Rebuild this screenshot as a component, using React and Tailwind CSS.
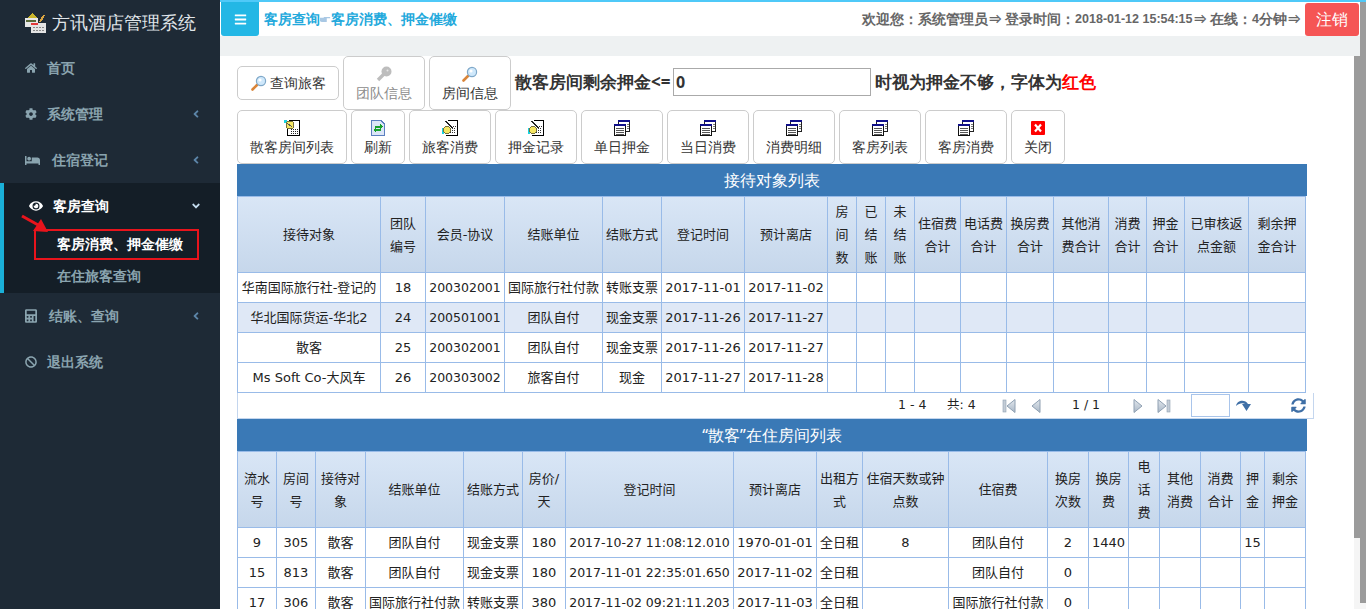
import React from 'react';
import { FaHome, FaCog, FaBed, FaEye, FaCalculator, FaBan, FaAngleLeft, FaAngleDown, FaBars, FaSyncAlt } from 'react-icons/fa';

const font = "font-['DejaVu_Sans','Noto_Sans_CJK_SC',sans-serif]";

// little toolbar pictures, drawn by hand
const Magnifier = () => (
    <svg width="16" height="16" viewBox="0 0 16 16">
        <path d="M1.5 14.5L6 10" stroke="#d9853a" strokeWidth="2.6" strokeLinecap="round" />
        <circle cx="10" cy="6" r="4.6" fill="#cfe8fb" stroke="#7fa8c9" strokeWidth="1.2" />
        <circle cx="9" cy="5" r="1.6" fill="#ffffff" />
    </svg>
);

const KeyIcon = () => (
    <svg width="16" height="16" viewBox="0 0 16 16">
        <circle cx="10.500" cy="5.500" r="5" fill="#bdbdbd" />
        <path d="M8 8L2 14" stroke="#bdbdbd" strokeWidth="3.400" />
        <circle cx="11.500" cy="4.500" r="1" fill="#e6e6e6" />
    </svg>
);

const StarDoc = () => (
    <svg width="16" height="16" viewBox="0 0 16 16" shapeRendering="crispEdges">
        <path d="M5 0.5H15.5V15.5H3V6" fill="#fff" stroke="#000" />
        <path d="M7 9h7M7 11h7M7 13h7" stroke="#222" strokeDasharray="1 1" />
        <rect x="0" y="0" width="3" height="3" fill="#19d3e0" />
        <circle cx="6" cy="5" r="4" fill="#f5e663" stroke="#77713a" />
        <path d="M3 3l5 4" stroke="#555" />
    </svg>
);

const RefreshDoc = () => (
    <svg width="14" height="16" viewBox="0 0 14 16" shapeRendering="crispEdges">
        <path d="M0.5 0.5H10L13.5 4V15.5H0.5Z" fill="#dbe6f7" stroke="#5b7fc0" />
        <path d="M4 6h5V4l3 3-3 2V8H4z" fill="#18a22c" />
        <path d="M10 11H5v2L2 10l3-2v1h5z" fill="#18a22c" />
    </svg>
);

const PenDoc = () => (
    <svg width="16" height="16" viewBox="0 0 16 16" shapeRendering="crispEdges">
        <path d="M6 0.5H15.5V15.5H4" fill="#fff" stroke="#000" />
        <path d="M9 6h5M10 8h4M10 10h4M8 12h6" stroke="#333" strokeDasharray="1 1" />
        <rect x="0" y="8" width="2" height="6" fill="#19d3e0" />
        <circle cx="5" cy="10" r="3.6" fill="#f5e663" stroke="#77713a" />
        <path d="M4 1l6 7" stroke="#222" strokeWidth="1.6" />
    </svg>
);

const PagesIcon = () => (
    <svg width="16" height="16" viewBox="0 0 16 16" shapeRendering="crispEdges">
        <rect x="4.500" y="0.500" width="11" height="11" fill="#fff" stroke="#222" />
        <rect x="4" y="0" width="12" height="2" fill="#10108a" />
        <rect x="0.500" y="4.500" width="11" height="11" fill="#fff" stroke="#111" />
        <rect x="0" y="4" width="12" height="2" fill="#10108a" />
        <path d="M2 8h8M2 10h8M2 12h8M2 14h8" stroke="#555" />
        <path d="M13 4h2M13 6h2M13 8h2" stroke="#777" />
    </svg>
);

const CloseIcon = () => (
    <svg width="14" height="14" viewBox="0 0 14 14">
        <rect width="14" height="14" rx="1" fill="#ff0000" />
        <path d="M4 3.500l6 7M10 3.500l-6 7" stroke="#fff" strokeWidth="2.200" />
    </svg>
);

const LogoIcon = () => (
    <svg width="22" height="24" viewBox="0 0 22 24" shapeRendering="crispEdges">
        <path d="M3 7L7 2l5 5z" fill="#c9b52c" />
        <rect x="0" y="7" width="13" height="9" fill="#e8e8e8" />
        <rect x="1" y="9" width="10" height="2" fill="#5a6a3a" />
        <rect x="6" y="12" width="15" height="10" fill="#e4e4e4" />
        <rect x="6" y="12" width="7" height="2" fill="#e23a3a" />
        <path d="M8 16h11M8 19h11" stroke="#888" strokeDasharray="2 1" />
        <path d="M15 11l4-7" stroke="#d9a441" strokeWidth="2" />
    </svg>
);

const HandIcon = () => (
    <svg width="11" height="7" viewBox="0 0 13 8">
        <path d="M0 2h4l1-1h7v1.500H8V7H2L0 6z" fill="#a9c8e4" />
    </svg>
);

const PagerArrow = ({ dir, bar }) => (
    <svg width="15" height="16" viewBox="0 0 15 16">
        <defs>
            <linearGradient id="pagerFill" x1="0" y1="0" x2="0" y2="1">
                <stop offset="0" stopColor="#e3e8ee" />
                <stop offset="1" stopColor="#a9b7c6" />
            </linearGradient>
        </defs>
        <g transform={dir === 'right' ? 'matrix(-1 0 0 1 15 0)' : undefined}>
            {bar && <rect x="1" y="2" width="3" height="12" fill="#c3ccd6" stroke="#8fa0b2" strokeWidth="0.600" />}
            <path d="M13 1.500V14.500L5 8Z" fill="url(#pagerFill)" stroke="#8fa0b2" />
        </g>
    </svg>
);

const GoArrow = () => (
    <svg width="17" height="16" viewBox="0 0 17 16">
        <path d="M1 8C2 2 10 1 13 6L16 6L11.500 13L7 6H10C8 4.500 4 5 1 8Z" fill="#3f6fa6" />
    </svg>
);

const menuItems = [
    { label: '首页', Icon: FaHome, gap: 'gap-[10px]' },
    { label: '系统管理', Icon: FaCog, gap: 'gap-[10px]', arrow: true },
    { label: '住宿登记', Icon: FaBed, gap: 'gap-[12px]', arrow: true, wide: true },
];

const SideItem = ({ label, Icon, gap, arrow, wide }) => (
    <div className={`flex h-[46px] items-center pl-[25px] pr-[18px] text-[#8aa4af] text-sm font-bold ${gap}`}>
        <Icon className={wide ? 'w-[15px] h-[15px]' : 'w-3 h-[14px]'} />
        <span className="flex-1">{label}</span>
        {arrow && <FaAngleLeft className="w-3 h-3 text-[#5c85a8]" />}
    </div>
);

const Sidebar = () => (
    <aside className="w-[220px] shrink-0 bg-[#1e2a36] h-full">
        <div className="flex h-[45px] items-center gap-[5px] pl-[25px]">
            <LogoIcon />
            <span className="text-[18px] text-[#e0e6ea] font-medium">方讯酒店管理系统</span>
        </div>
        {menuItems.map((item) => (
            <SideItem key={item.label} {...item} />
        ))}
        <div className="h-[110px] bg-[#141e27] border-l-4 border-[#1ab0d8]">
            <div className="flex h-[46px] items-center gap-[10px] pl-[25px] pr-[18px] text-white text-sm font-bold">
                <FaEye className="w-[14px] h-[14px]" />
                <span className="flex-1">客房查询</span>
                <FaAngleDown className="w-3 h-3 text-[#c4dcef]" />
            </div>
            <div className="ml-[30px] w-[165px] h-[31px] flex items-center pl-[21px] border-2 border-[#e8141c] text-white text-[13.500px] font-bold">
                客房消费、押金催缴
            </div>
            <div className="h-[33px] flex items-center pl-[53px] text-[#8aa4af] text-[13.500px] font-bold">在住旅客查询</div>
        </div>
        <SideItem label="结账、查询" Icon={FaCalculator} gap="gap-[12px]" arrow />
        <SideItem label="退出系统" Icon={FaBan} gap="gap-[10px]" />
    </aside>
);

const TopBar = () => (
    <header className="h-[34px] flex items-center bg-white">
        <button className="w-[38px] h-[34px] ml-px bg-[#23b7e5] rounded-b-[3px] flex items-center justify-center text-white">
            <FaBars className="w-[13px] h-[13px]" />
        </button>
        <div className="ml-[5px] flex items-center text-sm font-bold text-[#23a9dc]">
            <span>客房查询</span>
            <HandIcon />
            <span>客房消费、押金催缴</span>
        </div>
        <div className="ml-auto flex items-center text-[#666] text-[13.500px] font-bold whitespace-pre">
            <span>{'欢迎您\uff1a系统管理员⇒ 登录时间\uff1a'}</span>
            <span className="font-['Liberation_Sans'] text-[12.500px]">2018-01-12 15:54:15</span>
            <span>{'⇒ 在线\uff1a'}</span>
            <span className="font-['Liberation_Sans'] text-[12.500px]">4</span>
            <span>分钟⇒</span>
        </div>
        <button className="ml-1 w-[54px] h-[33px] mr-px bg-[#f55555] rounded-[3px] text-white text-base">注销</button>
    </header>
);

const ToolButton = ({ icon, label, disabled }) => (
    <button className={`h-[54px] px-3 shrink-0 bg-white border border-[#ccc] rounded-[5px] flex flex-col items-center pt-[9px] text-sm leading-[20px] ${disabled ? 'text-[#8c8c8c]' : 'text-[#333]'}`}>
        <span className="h-4 flex items-center">{icon}</span>
        <span className="mt-[1px]">{label}</span>
    </button>
);

const Toolbar = () => (
    <div className="text-[#333]">
        <div className="flex items-center gap-1 h-[54px]">
            <button className="h-[34px] w-[102px] shrink-0 bg-white border border-[#ccc] rounded-[5px] flex items-center justify-center gap-[3px] text-sm">
                <Magnifier />
                <span>查询旅客</span>
            </button>
            <ToolButton icon={<KeyIcon />} label="团队信息" disabled />
            <ToolButton icon={<Magnifier />} label="房间信息" />
            <span className="w-[154px] whitespace-nowrap text-[17px] leading-6 font-bold mb-[3px]">散客房间剩余押金&lt;=</span>
            <input
                readOnly
                value="0"
                className="w-[198px] h-[28px] mb-[2px] border border-[#aaa] px-[2px] text-base font-bold text-[#333] outline-none"
            />
            <span className="text-[17px] leading-6 font-bold mb-[3px]">
                {'时视为押金不够\uff0c字体为'}<span className="text-[#ff0000]">红色</span>
            </span>
        </div>
        <div className="flex items-center gap-1 h-[54px]">
            <ToolButton icon={<StarDoc />} label="散客房间列表" />
            <ToolButton icon={<RefreshDoc />} label="刷新" />
            <ToolButton icon={<PenDoc />} label="旅客消费" />
            <ToolButton icon={<PenDoc />} label="押金记录" />
            <ToolButton icon={<PagesIcon />} label="单日押金" />
            <ToolButton icon={<PagesIcon />} label="当日消费" />
            <ToolButton icon={<PagesIcon />} label="消费明细" />
            <ToolButton icon={<PagesIcon />} label="客房列表" />
            <ToolButton icon={<PagesIcon />} label="客房消费" />
            <ToolButton icon={<CloseIcon />} label="关闭" />
        </div>
    </div>
);

// column widths include the right border, first one also has the left border
const guestCols = [144, 45, 79, 98, 59, 83, 83, 29, 29, 29, 46, 46, 47, 55, 38, 38, 64, 57];
const guestHead = ['接待对象', '团队编号', '会员-协议', '结账单位', '结账方式', '登记时间', '预计离店', '房间数', '已结账', '未结账', '住宿费合计', '电话费合计', '换房费合计', '其他消费合计', '消费合计', '押金合计', '已审核返点金额', '剩余押金合计'];
const guestRows = [
    ['华南国际旅行社-登记的', '18', '200302001', '国际旅行社付款', '转账支票', '2017-11-01', '2017-11-02'],
    ['华北国际货运-华北2', '24', '200501001', '团队自付', '现金支票', '2017-11-26', '2017-11-27'],
    ['散客', '25', '200302001', '团队自付', '现金支票', '2017-11-26', '2017-11-27'],
    ['Ms Soft Co-大风车', '26', '200303002', '旅客自付', '现金', '2017-11-27', '2017-11-28'],
];

const roomCols = [40, 39, 50, 98, 59, 43, 168, 83, 46, 86, 99, 41, 40, 31, 41, 40, 24, 41];
const roomHead = ['流水号', '房间号', '接待对象', '结账单位', '结账方式', '房价/天', '登记时间', '预计离店', '出租方式', '住宿天数或钟点数', '住宿费', '换房次数', '换房费', '电话费', '其他消费', '消费合计', '押金', '剩余押金'];
const roomRows = [
    ['9', '305', '散客', '团队自付', '现金支票', '180', '2017-10-27 11:08:12.010', '1970-01-01', '全日租', '8', '团队自付', '2', '1440', '', '', '', '15', ''],
    ['15', '813', '散客', '团队自付', '现金支票', '180', '2017-11-01 22:35:01.650', '2017-11-02', '全日租', '', '团队自付', '0'],
    ['17', '306', '散客', '国际旅行社付款', '转账支票', '380', '2017-11-02 09:21:11.203', '2017-11-03', '全日租', '', '国际旅行社付款', '0'],
];

const DataTable = ({ cols, head, rows, shaded }) => (
    <table className={`table-fixed w-[1069px] border-separate border-spacing-0 text-[13px] text-[#222] ${font}`}>
        <colgroup>
            {cols.map((w, i) => (
                <col key={i} style={{ width: w }} />
            ))}
        </colgroup>
        <thead>
            <tr>
                {head.map((h, i) => (
                    <th
                        key={h + i}
                        className={`h-[77px] px-[3px] font-normal leading-[23px] text-center border-t border-r border-b border-[#99bbe8] bg-gradient-to-b from-[#d9e6f6] to-[#c6d7eb] ${i === 0 ? 'border-l' : ''}`}
                    >
                        {h}
                    </th>
                ))}
            </tr>
        </thead>
        <tbody>
            {rows.map((row, r) => (
                <tr key={r} className={r === shaded ? 'bg-[#dfe8f6]' : 'bg-white'}>
                    {cols.map((_, i) => {
                        const text = row[i] || '';
                        const tight = /^[\d\s:.-]+$/.test(text) && (text.length === 9 || text.length > 20);
                        return (
                            <td
                                key={i}
                                className={`h-[30px] px-0 text-center whitespace-nowrap border-r border-b border-[#99bbe8] ${i === 0 ? 'border-l' : ''} ${tight ? 'text-[12.500px] pt-px' : ''}`}
                            >
                                {text}
                            </td>
                        );
                    })}
                </tr>
            ))}
        </tbody>
    </table>
);

const TableTitle = ({ children }) => (
    <div className="w-[1070px] h-[32px] bg-[#3a79b6] text-white text-base font-normal leading-[32px] text-center">{children}</div>
);

const Pager = () => (
    <div className={`w-[1077px] h-[26px] bg-white flex items-center border-l border-r border-b border-[#c4d6ee] text-[12.500px] text-[#222] ${font}`}>
        <span className="ml-[660px] w-[30px]">1 - 4</span>
        <span className="ml-[19px] w-[28px] whitespace-nowrap">共: 4</span>
        <span className="ml-[27px]"><PagerArrow dir="left" bar /></span>
        <span className="ml-[10px]"><PagerArrow dir="left" /></span>
        <span className="ml-[30px] w-[30px] whitespace-nowrap">1 / 1</span>
        <span className="ml-[30px]"><PagerArrow dir="right" /></span>
        <span className="ml-[9px]"><PagerArrow dir="right" bar /></span>
        <input readOnly className="ml-[20px] w-[39px] h-[23px] border border-[#a9c5eb] outline-none" />
        <span className="ml-[5px]"><GoArrow /></span>
        <FaSyncAlt className="ml-[39px] w-[15px] h-[15px] text-[#3f6fa6]" />
    </div>
);

const App = () => (
    <div className={`relative w-[1366px] h-[609px] overflow-hidden flex bg-white ${font.replace('DejaVu_Sans', 'Liberation_Sans')}`}>
        <Sidebar />
        <div className="flex-1 border-t-2 border-[#4fc9f8]">
            <main className="w-[1140px]">
                <TopBar />
                <div className="h-[20px] bg-[#eef1f2]" />
                <div className="pl-[17px]">
                    <Toolbar />
                    <TableTitle>接待对象列表</TableTitle>
                    <DataTable cols={guestCols} head={guestHead} rows={guestRows} shaded={1} />
                    <Pager />
                    <TableTitle>“散客”在住房间列表</TableTitle>
                    <DataTable cols={roomCols} head={roomHead} rows={roomRows} />
                </div>
            </main>
        </div>
        {/* the two browser scrollbars */}
        <div className="absolute right-0 top-0 bottom-0 w-[12px]">
            <div className="absolute top-[56px] left-0 w-[6px] h-[482px] bg-[#9b9b9b]" />
            <div className="absolute top-[538px] left-0 w-[6px] bottom-0 bg-[#f5f5f5]" />
            <div className="absolute top-[2px] right-0 w-[6px] h-[601px] bg-[#9b9b9b]" />
            <div className="absolute top-[603px] right-0 w-[6px] bottom-0 bg-[#f5f5f5]" />
        </div>
        {/* red arrow pointing at the sub menu */}
        <svg className="absolute left-[20px] top-[214px]" width="32" height="22" viewBox="0 0 32 22">
            <path d="M2 2L20 12" stroke="#e8141c" strokeWidth="3" />
            <path d="M28 18L13 17L21 5Z" fill="#e8141c" />
        </svg>
    </div>
);

export default App;
